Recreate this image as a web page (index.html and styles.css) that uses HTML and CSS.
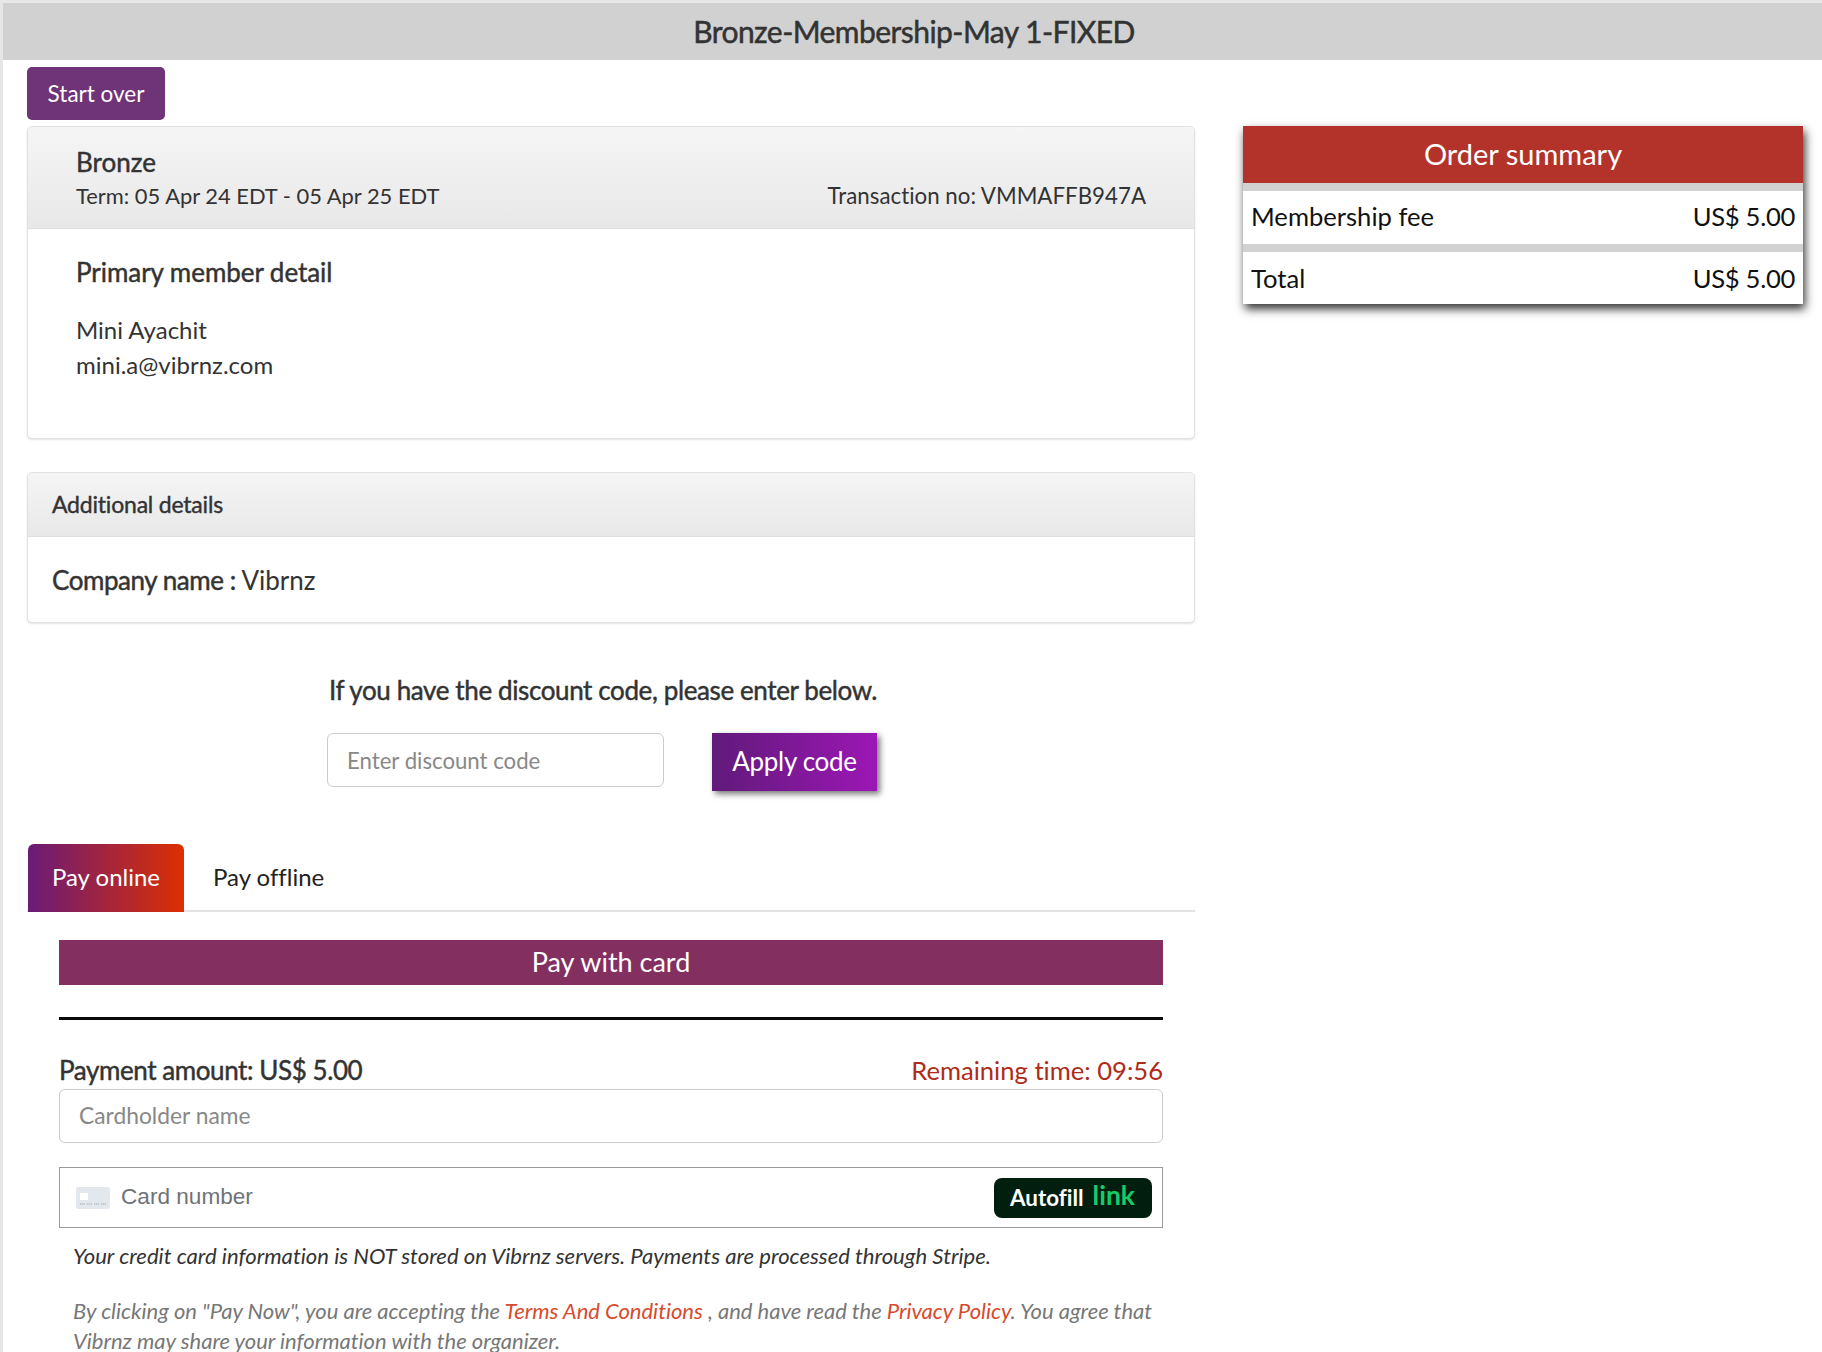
FILE: index.html
```html
<!DOCTYPE html>
<html lang="en">
<head>
<meta charset="utf-8">
<title>Bronze-Membership-May 1-FIXED</title>
<link rel="stylesheet" href="styles.css">
</head>
<body>
<div class="page">
  <header class="title-bar"><h1>Bronze-Membership-May 1-FIXED</h1></header>
  <div class="start-row"><button class="start-btn">Start over</button></div>
  <div class="columns">
    <main class="left">
      <section class="card member-card">
        <div class="card-head member-head">
          <div class="plan">Bronze</div>
          <div class="term-row"><span class="term">Term: 05 Apr 24 EDT - 05 Apr 25 EDT</span><span class="txn">Transaction no: VMMAFFB947A</span></div>
        </div>
        <div class="member-body">
          <h2 class="member-title">Primary member detail</h2>
          <p class="member-line">Mini Ayachit</p>
          <p class="member-line">mini.a@vibrnz.com</p>
        </div>
      </section>
      <section class="card extra-card">
        <div class="card-head extra-head">Additional details</div>
        <div class="extra-body"><strong>Company name :</strong> Vibrnz</div>
      </section>
      <section class="discount">
        <div class="discount-title">If you have the discount code, please enter below.</div>
        <div class="discount-form">
          <input class="field discount-input" placeholder="Enter discount code">
          <button class="apply-btn">Apply code</button>
        </div>
      </section>
      <nav class="tabs">
        <a class="tab tab-active">Pay online</a>
        <a class="tab">Pay offline</a>
      </nav>
      <section class="pay">
        <div class="pay-bar">Pay with card</div>
        <hr class="pay-rule">
        <div class="amount-row"><span class="amount">Payment amount: US$ 5.00</span><span class="timer">Remaining time: 09:56</span></div>
        <input class="field holder-input" placeholder="Cardholder name">
        <div class="card-number">
          <svg class="card-icon" width="34" height="22" viewBox="0 0 34 22"><rect width="34" height="22" rx="2" fill="#e3e8ee"/><rect x="4" y="6" width="8" height="7" fill="#fff"/><path d="M4 17h5M11 17h5M18 17h5M25 17h5" stroke="#b5bdca" stroke-width="1.6" stroke-dasharray="1.4 .6"/></svg>
          <span class="card-label">Card number</span>
          <span class="autofill"><span>Autofill</span><span class="link-word">link</span></span>
        </div>
        <p class="note">Your credit card information is NOT stored on Vibrnz servers. Payments are processed through Stripe.</p>
        <p class="terms">By clicking on "Pay Now", you are accepting the <a>Terms And Conditions</a> , and have read the <a>Privacy Policy</a>. You agree that Vibrnz may share your information with the organizer.</p>
      </section>
    </main>
    <aside class="summary">
      <div class="summary-title">Order summary</div>
      <div class="summary-row"><span>Membership fee</span><span class="price">US$ 5.00</span></div>
      <div class="summary-row"><span>Total</span><span class="price">US$ 5.00</span></div>
    </aside>
  </div>
</div>
</body>
</html>
```

FILE: styles.css
```css
* { box-sizing: border-box; }
html, body { margin: 0; height: 1352px; overflow: hidden; background: #fff; }
body { font-family: Lato, "Liberation Sans", sans-serif; color: #333; font-variant-ligatures: none; }
.page { border-left: 3px solid #e6e6e6; border-top: 3px solid #e6e6e6; height: 1352px; overflow: hidden; }
.title-bar { background: #d1d1d1; height: 57px; display: flex; align-items: center; justify-content: center; padding: 0 0 2px 3px; }
.title-bar h1 { margin: 0; font-size: 30px; font-weight: 400; color: #333; letter-spacing: -.55px; -webkit-text-stroke: .5px #333; }
.start-row { padding: 7px 0 0 24px; height: 66px; }
.start-btn { width: 138px; height: 53px; padding: 0 0 1px; background: #6f3377; color: #fff; border: 0; border-radius: 5px; font: 400 22.5px Lato, sans-serif; font-variant-ligatures: none; }
.columns { display: flex; align-items: flex-start; padding-left: 24px; gap: 48px; }
.left { width: 1168px; }
.card { border: 1px solid #e2e2e2; border-radius: 5px; box-shadow: 0 1px 2px rgba(0,0,0,.12); background: #fff; overflow: hidden; }
.card-head { background: linear-gradient(#f5f5f5, #e8e8e8); border-bottom: 1px solid #dedede; }
.member-card { height: 313px; }
.member-head { height: 102px; padding: 18px 48px 0 48px; }
.plan { font-size: 26px; line-height: 34px; -webkit-text-stroke: .45px #333; }
.term-row { display: flex; justify-content: space-between; align-items: baseline; line-height: 32px; margin-top: 1px; }
.term { font-size: 21.9px; }
.txn { font-size: 22.3px; }
.member-body { padding: 25px 48px; }
.member-title { margin: 0 0 22px; font-size: 26px; font-weight: 400; line-height: 36px; letter-spacing: -.05px; -webkit-text-stroke: .45px #333; }
.member-line { margin: 0; font-size: 24px; line-height: 35px; }
.extra-card { height: 151px; margin-top: 33px; }
.extra-head { height: 64px; padding: 0 0 1px 24px; display: flex; align-items: center; font-size: 23px; letter-spacing: -.2px; -webkit-text-stroke: .4px #333; }
.extra-body { padding: 26px 24px; font-size: 26px; line-height: 34px; }
.extra-body strong { font-weight: 400; letter-spacing: -.45px; -webkit-text-stroke: .45px #333; }
.discount { margin: 50px 0 0 300px; width: 550px; }
.discount-title { font-size: 26px; line-height: 34px; padding-left: 2px; white-space: nowrap; letter-spacing: -.39px; -webkit-text-stroke: .45px #333; }
.discount-form { display: flex; align-items: flex-start; justify-content: space-between; margin-top: 26px; }
.field { display: block; border: 1px solid #ccc; border-radius: 6px; background: #fff; font: 400 22.2px Lato, sans-serif; color: #333; padding: 0 19px; outline: 0; }
.field::placeholder { color: #888; opacity: 1; }
.discount-input { width: 337px; height: 54px; }
.apply-btn { width: 165px; height: 58px; padding: 0 0 2px; border: 0; background: linear-gradient(to right, #601a7a, #9c17b5); color: #fff; font: 400 26px Lato, sans-serif; letter-spacing: -.3px; box-shadow: 3px 3px 6px #777; }
.tabs { display: flex; margin-top: 53px; border-bottom: 2px solid #e3e3e3; height: 68px; padding-left: 1px; }
.tab { display: flex; align-items: center; justify-content: center; height: 68px; padding-bottom: 3px; font-size: 24px; color: #222; }
.tab-active { width: 156px; background: linear-gradient(to right, #6a1b78, #dc2f02); color: #fff; border-radius: 6px 6px 0 0; }
.tab:not(.tab-active) { padding-left: 29px; }
.pay { margin: 28px 0 0 32px; width: 1104px; }
.pay-bar { height: 45px; background: #833060; color: #fff; font-size: 27px; display: flex; align-items: center; justify-content: center; padding-bottom: 3px; }
.pay-rule { margin: 32px 0 0; border: 0; height: 3px; background: #0a0a0a; }
.amount-row { display: flex; justify-content: space-between; align-items: center; height: 69px; padding-top: 31px; }
.amount { font-size: 26px; letter-spacing: -.42px; -webkit-text-stroke: .45px #333; }
.timer { font-size: 25.6px; color: #b02a18; }
.holder-input { width: 100%; height: 54px; font-size: 22.8px; padding-bottom: 2px; }
.card-number { margin-top: 24px; height: 61px; border: 1px solid #999; display: flex; align-items: center; padding: 0 10px 0 16px; }
.card-icon { margin-right: 11px; flex: none; }
.card-label { flex: 1; font: 400 22.6px "Liberation Sans", sans-serif; color: #6f7278; padding-bottom: 1px; }
.autofill { width: 158px; height: 40px; border-radius: 8px; background: #011e0f; color: #fff; display: flex; align-items: center; padding-left: 16px; gap: 9px; font-size: 22.4px; font-weight: 700; }
.link-word { color: #14cc68; font-size: 26.5px; line-height: 30px; margin-top: -6px; }
.note { margin: 13px 0 0 14px; font-size: 22.1px; line-height: 30px; font-style: italic; color: #333; }
.terms { margin: 25px 0 0 14px; font-size: 22px; letter-spacing: -.02px; line-height: 30px; font-style: italic; color: #777; width: 1090px; }
.terms a { color: #d84a2d; }
.summary { width: 560px; background: #d1d1d1; box-shadow: 2px 5px 9px #333; }
.summary-title { height: 57px; background: #b33229; color: #fff; font-size: 29px; padding-bottom: 2px; display: flex; align-items: center; justify-content: center; }
.summary-row { height: 53px; margin-top: 8px; padding: 0 8px 3px; background: #fff; color: #111; font-size: 25.6px; display: flex; justify-content: space-between; align-items: center; }
.summary-row:last-child { height: 52px; padding-bottom: 1px; }
.price { letter-spacing: -.3px; }
```
